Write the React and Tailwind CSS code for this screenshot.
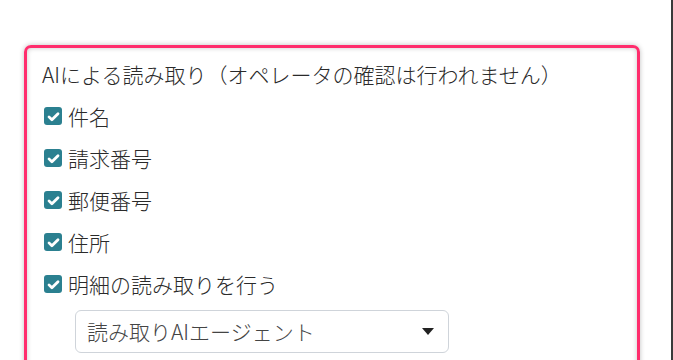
import React from "react";

const items = ["件名", "請求番号", "郵便番号", "住所", "明細の読み取りを行う"];

function Check() {
  return (
    <span className="flex h-[18px] w-[18px] shrink-0 items-center justify-center rounded-[3px] bg-[#2b8090]">
      <svg viewBox="0 0 16 16" className="h-[15px] w-[15px]" fill="none">
        <path d="M3.2 8.4l3.1 3.1L12.8 5" stroke="#fff" strokeWidth="3" strokeLinecap="round" strokeLinejoin="round" />
      </svg>
    </span>
  );
}

export default function App() {
  return (
    <div
      className="relative h-[360px] w-[673px] overflow-hidden bg-white font-light text-[#2a2a2a]"
      style={{ fontFamily: '"Noto Sans CJK JP", "Noto Sans", sans-serif' }}
    >
      <div className="absolute right-0 top-0 h-full w-[2px] bg-[#3a3a3a]" />
      <div className="pl-[24px] pt-[45px]">
        <div className="h-[340px] w-[616px] rounded-[7px] border-[3px] border-[#ff2d6d] pl-[15px] pt-[5px] shadow-[0_0_5px_rgba(0,0,0,0.25),inset_0_0_5px_rgba(0,0,0,0.22)]">
          <div className="h-[42px] text-[21px] leading-[42px]">
            AIによる読み取り（オペレータの確認は行われません）
          </div>
          {items.map((t) => (
            <div key={t} className="flex h-[42px] items-center gap-[6px] pl-[2px] text-[21px]">
              <Check />
              <span className="leading-[42px]">{t}</span>
            </div>
          ))}
          <div className="ml-[33px] mt-[5px] flex h-[43px] w-[374px] items-center justify-between rounded-[6px] border border-[#cfd4da] pl-[11px] pr-[14px]">
            <span className="text-[21px] text-[#444]">読み取りAIエージェント</span>
            <svg viewBox="0 0 12 7" className="h-[7px] w-[12px]">
              <path d="M0 0h12L6 7z" fill="#222" />
            </svg>
          </div>
        </div>
      </div>
    </div>
  );
}
